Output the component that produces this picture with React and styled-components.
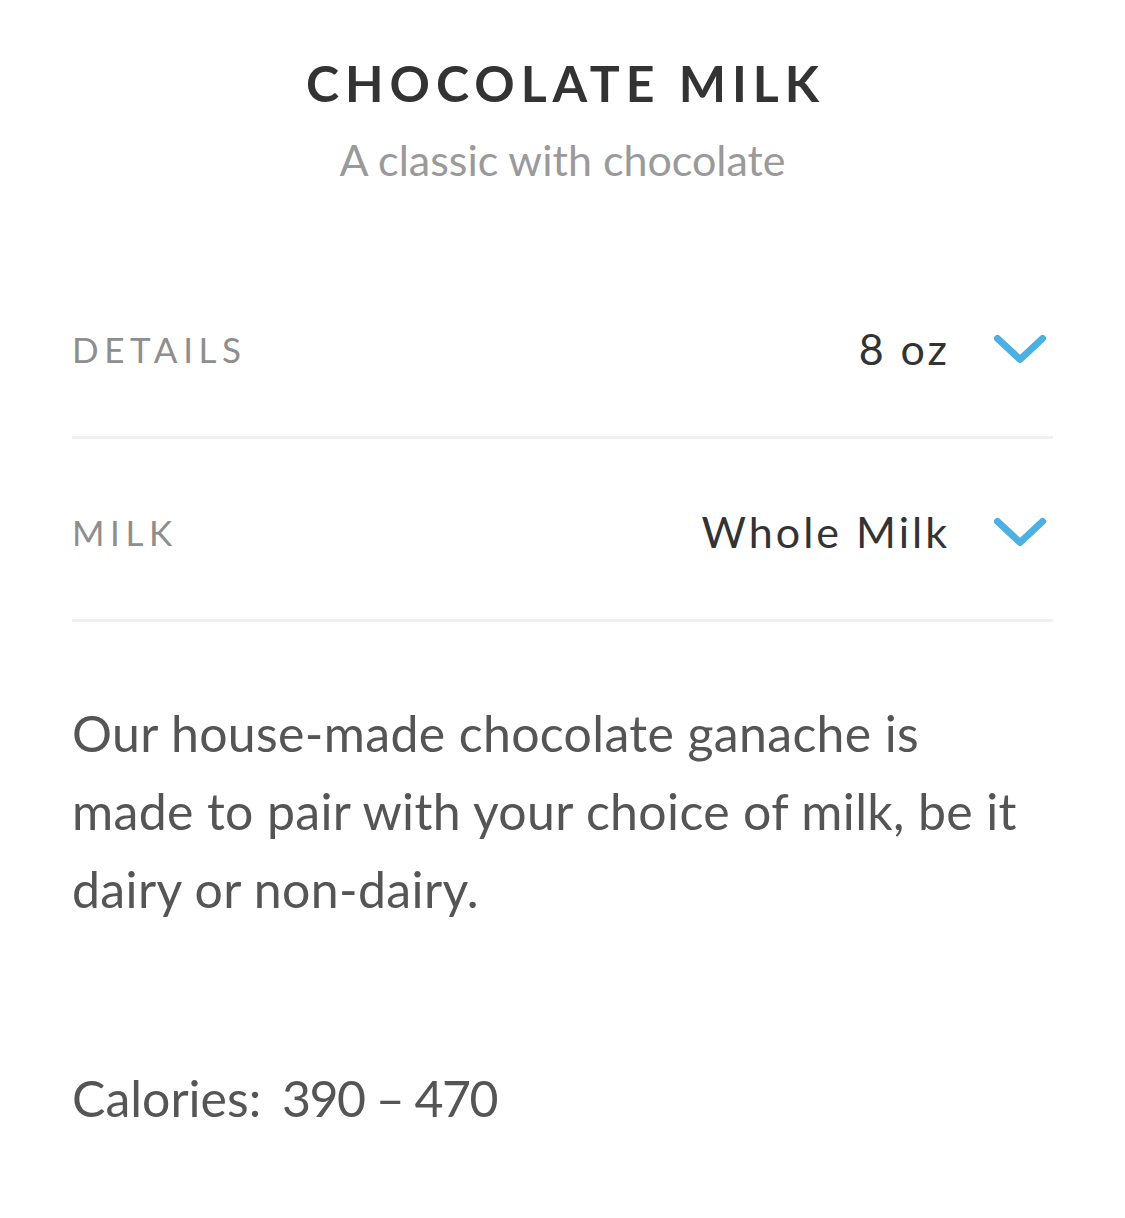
import React from "react";
import styled, { createGlobalStyle } from "styled-components";

const GlobalStyle = createGlobalStyle`
  html, body { margin: 0; padding: 0; background: #ffffff; }
  body { font-family: Lato, "Noto Sans", "Liberation Sans", sans-serif; -webkit-font-smoothing: antialiased; }
  * { box-sizing: border-box; }
`;

const Page = styled.div`
  width: 1125px;
  min-height: 1218px;
  padding: 53px 72px 0;
  background: #fff;
`;

const Header = styled.header`
  display: flex;
  flex-direction: column;
  align-items: center;
  margin-bottom: 70px;
`;

const Title = styled.h1`
  margin: 0 -6px 0 0;
  font-size: 50px;
  line-height: 60px;
  font-weight: 700;
  letter-spacing: 6px;
  color: #333333;
`;

const Subtitle = styled.p`
  margin: 21px 0 0;
  font-size: 43px;
  line-height: 52px;
  font-weight: 400;
  color: #9a9a9a;
`;

const OptionRow = styled.div`
  display: flex;
  align-items: center;
  justify-content: space-between;
  height: 183px;
  padding-top: 6px;
  border-bottom: 3px solid #f0f0f0;
`;

const Label = styled.span`
  font-size: 35px;
  line-height: 42px;
  letter-spacing: 0.16em;
  color: #8e8e8e;
  text-transform: uppercase;
`;

const ValueGroup = styled.button`
  display: flex;
  align-items: center;
  gap: 47px;
  border: 0;
  background: none;
  padding: 0;
  font: inherit;
  cursor: pointer;
`;

const Value = styled.span`
  font-size: 43px;
  line-height: 50px;
  letter-spacing: 3px;
  margin-right: -3px;
  color: #333333;
`;

const Chevron = () => (
  <svg width="59" height="30" viewBox="0 0 59 30" fill="none" aria-hidden="true">
    <path
      d="M3.5 4.5 L26 25.5 L48.5 4.5"
      stroke="#4cb1e2"
      strokeWidth="7"
      strokeLinecap="round"
      strokeLinejoin="round"
    />
  </svg>
);

const Description = styled.p`
  margin: 72px 0 0;
  font-size: 50px;
  line-height: 78px;
  letter-spacing: 0.35px;
  color: #555555;
`;

const Calories = styled.p`
  margin: 131px 0 0;
  font-size: 50px;
  line-height: 78px;
  color: #555555;
`;

const Range = styled.span`
  margin-left: 8px;
  letter-spacing: -1.5px;
`;

const options = [
  { label: "Details", value: "8 oz" },
  { label: "Milk", value: "Whole Milk" },
];

export default function App() {
  return (
    <>
      <GlobalStyle />
      <Page>
        <Header>
          <Title>CHOCOLATE MILK</Title>
          <Subtitle>A classic with chocolate</Subtitle>
        </Header>
        {options.map((o) => (
          <OptionRow key={o.label}>
            <Label>{o.label}</Label>
            <ValueGroup>
              <Value>{o.value}</Value>
              <Chevron />
            </ValueGroup>
          </OptionRow>
        ))}
        <Description>
          Our house-made chocolate ganache is made to pair with your choice of milk, be it dairy or non-dairy.
        </Description>
        <Calories>
          Calories: <Range>390 – 470</Range>
        </Calories>
      </Page>
    </>
  );
}
